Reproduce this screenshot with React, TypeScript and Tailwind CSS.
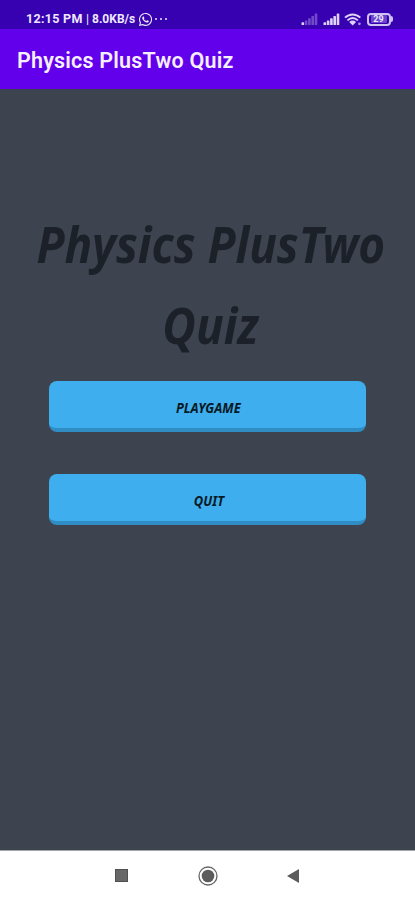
import { FaWhatsapp } from 'react-icons/fa';

const SignalIcon = ({ weak = false }: { weak?: boolean }) => (
  <svg width="17" height="13" viewBox="0 0 17 13" fill="#dcd2fa">
    <rect x="0.5" y="9.3" width="2.6" height="2.7" rx="0.6" />
    <g opacity={weak ? 0.35 : 1}>
      <rect x="3.8" y="7.5" width="2.6" height="4.5" rx="0.6" />
      <rect x="7.1" y="5.2" width="2.6" height="6.8" rx="0.6" />
      <rect x="10.4" y="3" width="2.6" height="9" rx="0.6" />
      <rect x="13.7" y="0.5" width="2.6" height="11.5" rx="0.6" />
    </g>
  </svg>
);

const WifiIcon = () => (
  <svg width="18" height="13" viewBox="0 0 18 13" fill="none" stroke="#dcd2fa">
    <path d="M1 4.6C5.5 0.3 11.8 0.3 16.3 4.6" strokeWidth="2" />
    <path d="M3.4 7.4C6.6 4.5 10.7 4.5 13.9 7.4" strokeWidth="1.9" />
    <path d="M5.2 8.9C7.5 7.1 9.8 7.1 12.1 8.9L8.65 12.5Z" fill="#dcd2fa" stroke="none" />
    <circle cx="15.4" cy="10.8" r="1.4" fill="#a58bea" stroke="none" />
  </svg>
);

const BatteryIcon = () => (
  <div className="flex items-center">
    <div className="flex h-[13px] w-[24px] items-center justify-center rounded-[4px] border-2 border-[#cfc3f5]">
      <span className="flex h-[8px] w-[16px] items-center justify-center rounded-[1px] bg-[#6a45cb] text-[9px] font-bold leading-none text-[#eee8ff]">
        29
      </span>
    </div>
    <div className="h-[6px] w-[2.5px] rounded-r-full bg-[#cfc3f5]" />
  </div>
);

const StatusBar = () => (
  <div className="flex h-[29px] items-center justify-between bg-[#3700b0] pl-[26px] pr-[22px] pt-[9px] text-[#eee8ff]">
    <div className="flex items-center whitespace-nowrap text-[12.5px] font-bold leading-none">
      <span className="w-[58px] tracking-[0.3px]">12:15 PM</span>
      <span className="w-[7px] text-center font-normal">|</span>
      <span className="ml-px w-[44px] text-[12px]">8.0KB/s</span>
      <FaWhatsapp className="ml-[2px] size-[15px]" />
      <span className="ml-[2px] flex gap-[3px]">
        <i className="size-[2px] rounded-full bg-[#eee8ff]" />
        <i className="size-[2px] rounded-full bg-[#eee8ff]" />
        <i className="size-[2px] rounded-full bg-[#eee8ff]" />
      </span>
    </div>
    <div className="flex items-center gap-[4.5px]">
      <SignalIcon weak />
      <SignalIcon />
      <WifiIcon />
      <BatteryIcon />
    </div>
  </div>
);

const MenuButton = ({ label }: { label: string }) => (
  <button className="flex h-[51px] w-[317px] items-center justify-center rounded-[8px] border-b-[4px] border-[#2f8dc4] bg-[#3eaeee] pl-[2px] pt-[6px] font-['Noto_Sans','Open_Sans',sans-serif] text-[14.5px] font-bold italic text-[#071a26]">
    <span className="inline-block scale-x-[0.89]">{label}</span>
  </button>
);

const NavBar = () => (
  <div className="flex h-[50px] items-center border-t border-[#a4a5aa] bg-white pl-[115px]">
    <div className="size-[13px] border border-[#505050] bg-[#686868]" />
    <svg className="ml-[70px]" width="20" height="20" viewBox="0 0 20 20">
      <circle cx="10" cy="10" r="9" fill="none" stroke="#666" strokeWidth="1.3" />
      <circle cx="10" cy="10" r="6.3" fill="#5c5c5c" />
    </svg>
    <svg className="ml-[68px]" width="14" height="16" viewBox="0 0 14 16">
      <path d="M13 1V15L1 8Z" fill="#5c5c5c" />
    </svg>
  </div>
);

const App = () => {
  return (
    <div className="flex h-[900px] w-[415px] flex-col overflow-hidden bg-[#3e444f] font-[Roboto,sans-serif]">
      <StatusBar />
      <header className="flex h-[60px] items-center bg-[#6200ec] pl-[17px] pt-[3px]">
        <h1 className="whitespace-nowrap text-[21.5px] font-semibold leading-none tracking-[0.2px] text-[#f6efff]">
          Physics PlusTwo Quiz
        </h1>
      </header>

      <main className="flex flex-1 flex-col items-center pt-[114px]">
        <h2 className="flex flex-col items-center whitespace-nowrap pl-[6px] text-center font-['Noto_Sans','Open_Sans',sans-serif] text-[51px] font-bold italic leading-[81px] text-[#1c2028]">
          <span className="scale-x-[0.9]">Physics PlusTwo</span>
          <span className="scale-x-[0.9]">Quiz</span>
        </h2>
        <div className="mt-[16px] flex flex-col gap-[42px]">
          <MenuButton label="PLAYGAME" />
          <MenuButton label="QUIT" />
        </div>
      </main>

      <NavBar />
    </div>
  );
};

export default App;
